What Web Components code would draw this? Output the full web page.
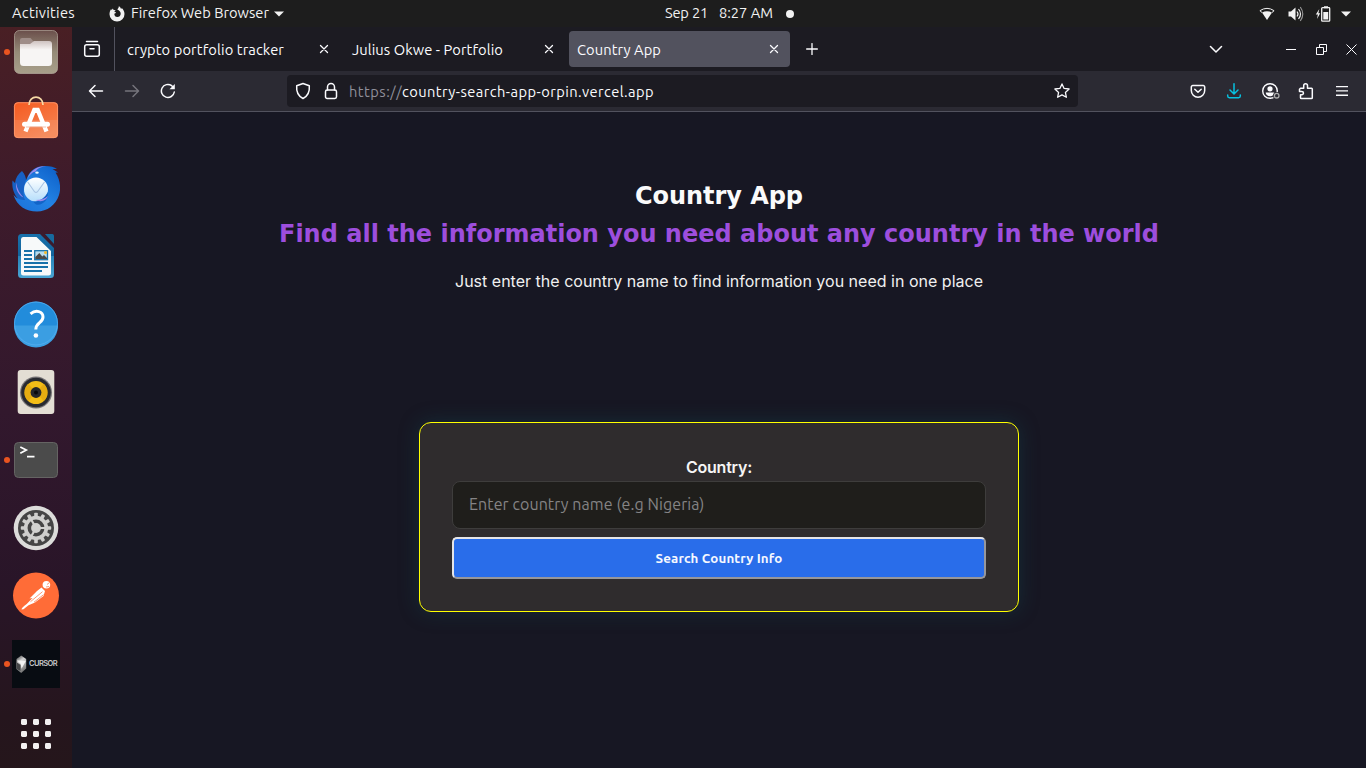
<!DOCTYPE html>
<html lang="en">
<head>
<meta charset="utf-8">
<title>Country App</title>
<style>
html,body{margin:0;height:100%;overflow:hidden;background:#171723}
body{font-family:Ubuntu,"Noto Sans",sans-serif;font-size:14.667px;color:#fbfbfe}
</style>
</head>
<body>
<desk-top></desk-top>
<script>
const line = 'fill="none" stroke="currentColor" stroke-width="1.3" stroke-linecap="round" stroke-linejoin="round"';
const bold = line.replace('1.3', '1.5');
const gear = Array.from({length:12},(_,i)=>`<rect x="22.2" y="8.8" width="3.6" height="6" rx=".8" transform="rotate(${i*30} 24 24)"/>`).join('');
const dots = [0,1,2].map(r=>[0,1,2].map(c=>`<rect x="${9+c*12}" y="${9+r*12}" width="6" height="6" rx="1.4"/>`).join('')).join('');
const ICONS = {
  flame:['0 0 16 16',16,'<path fill="#f2f2f2" d="M8.3 3.4c.7-1 1.600-1.900 1.500-3.200 1.500.8 2 1.700 2.200 2.700.5-.2.7-.6.8-1 1.600 1.500 2.700 3.500 2.700 6.100A7.500 7.500 0 0 1 .5 8.200c0-2.300.7-4 1.700-5.300l.3 1.300 1.400-1.700.7 1.600c.8-.2 1.700 0 2.200.5-.8.2-1.300.8-1.300 1.300l1.600.4c-.3.9-1.100 1-1.800 1.400C5.300 9.700 6.500 11 8.300 11c2 0 3.400-1.300 3.400-3.300 0-2.100-1.500-3.500-3.400-4.300z"/>'],
  tri:['0 0 10 6',10,'<path fill="#f2f2f2" d="M0 .5h10L5 5.500z"/>'],
  wifi:['0 0 16 14',16,'<path fill="#f2f2f2" d="M3 5.600Q8 2.800 13 5.600L8 13z"/><path fill="none" stroke="#f2f2f2" stroke-width="1" d="M3 5.500L.9 3.700Q8-1 15.100 3.700L13 5.500"/>'],
  volume:['0 0 16 16',16,'<path fill="#f2f2f2" d="M.5 5.500H3L7.500 1.500v13L3 10.500H.5z"/><path fill="none" stroke="#f2f2f2" stroke-width="1.200" d="M9 5.500q2 2.500 0 5M10.500 3q4 5 0 10"/><path fill="none" stroke="#999" stroke-width="1.100" d="M12.300 1q5 7 0 14"/>'],
  battery:['0 0 16 16',16,'<path fill="#f2f2f2" d="M4.300 3L.8 8.600h2.100L2 13l3.200-5.800H3.400zM9 .2h4v2H9z"/><rect x="6.700" y="1.700" width="8" height="13.500" rx=".8" fill="none" stroke="#f2f2f2" stroke-width="1.300"/><path fill="#f2f2f2" d="M8.300 6h4.900v7.500H8.300z"/>'],
  tabs:['0 0 18 18',18,`<g ${bold}><rect x="1.700" y="4.800" width="14.600" height="11.400" rx="2"/><path d="M3.500 1.500h11M7 8.800h4"/></g>`],
  x:['0 0 10 10',10,`<path ${line} d="M1.500 1.500l7 7M8.500 1.500l-7 7"/>`],
  plus:['0 0 12 12',12,`<path ${line} d="M6 .6v10.800M.6 6h10.800"/>`],
  chev:['0 0 14 8',14,`<path ${bold} d="M1.500 1.500L7 7l5.500-5.500"/>`],
  min:['0 0 11 11',11,'<path fill="currentColor" d="M0 5h10v1H0z"/>'],
  restore:['0 0 11 11',11,'<path fill="none" stroke="currentColor" d="M.5 3.500h7v7h-7zM3.500 3.500v-3h7v7h-3"/>'],
  close:['0 0 11 11',11,'<path fill="none" stroke="currentColor" d="M.5.5l10 10M10.500.5l-10 10"/>'],
  back:['0 0 16 16',16,`<path ${bold} d="M14.500 8H1.800M7 2.500L1.500 8 7 13.500"/>`],
  fwd:['0 0 16 16',16,`<path ${bold} d="M1.500 8h12.700M9 2.500L14.500 8 9 13.500"/>`],
  reload:['0 0 16 16',16,`<path ${bold} d="M14.300 9A6.500 6.500 0 1 1 11.700 2.700L13 4"/><path fill="currentColor" d="M14.800 1v5.300H9.500z"/>`],
  shield:['0 0 16 18',16,`<path ${bold} d="M8 1.500l6.300 2.200c.5 5.500-1.500 10.300-6.300 12.800C3.200 14 1.200 9.200 1.700 3.700z"/>`],
  lock:['0 0 14 18',14,`<g ${bold}><rect x="1.500" y="8" width="11" height="8.500" rx="1.700"/><path d="M3.500 8V5a3.500 3.500 0 0 1 7 0v3"/></g>`],
  star:['0 0 16 16',16,`<path ${line} d="M8 .9l2.100 4.500 5 .6-3.700 3.400 1 4.900L8 11.900l-4.400 2.400 1-4.900L.9 6l5-.6z"/>`],
  pocket:['0 0 16 16',16,`<path ${bold} d="M2.800 2.500h10.400a1.500 1.500 0 0 1 1.500 1.500v3.500a6.700 6.700 0 0 1-13.400 0V4a1.500 1.500 0 0 1 1.500-1.500zM4.800 6.200L8 9.300l3.200-3.100"/>`],
  down:['0 0 16 16',16,`<path ${bold} d="M8 .8v10M4 7l4 4 4-4M1.700 12v1a1.700 1.700 0 0 0 1.700 1.700h9.200a1.700 1.700 0 0 0 1.700-1.700v-1"/>`],
  account:['0 0 20 18',20,`<circle cx="9" cy="9" r="7.300" fill="none" stroke="currentColor" stroke-width="1.400"/><circle cx="9" cy="6.800" r="2.600" fill="currentColor"/><path fill="currentColor" d="M4.700 10.600h8.600c0 2-1.600 3.700-4.300 3.700s-4.300-1.700-4.300-3.700z"/><circle cx="15.700" cy="13.700" r="3.700" fill="#2b2a33"/><circle cx="15.700" cy="13.700" r="2.300" fill="#2b2a33" stroke="#aaa" stroke-width="1.300"/>`],
  puzzle:['0 0 16 18',16,`<path ${bold} d="M2.500 6.300h3.200V3.600a1.900 1.900 0 0 1 3.800 0v2.700h4a.8.8 0 0 1 .8.8v8.600a.8.8 0 0 1-.8.800H3.300a.8.800 0 0 1-.8-.8v-3h1.300a1.600 1.600 0 0 0 0-3.300H1.500V7.300z"/>`],
  menu:['0 0 12 12',12,'<path fill="currentColor" d="M0 1h12v1.300H0zM0 5.300h12v1.300H0zM0 9.600h12v1.300H0z"/>'],

  files:['0 0 48 48',48,'<defs><linearGradient id="a" x2="0" y2="1"><stop stop-color="#6b4f4b"/><stop offset=".5" stop-color="#958b78"/><stop offset="1" stop-color="#a89f8a"/></linearGradient><linearGradient id="b" x2="0" y2="1"><stop stop-color="#cfc3c1"/><stop offset=".35" stop-color="#f7f5f4"/></linearGradient></defs><rect x="2.500" y="2.500" width="43" height="43" rx="5" fill="url(#a)" stroke="#b3a99c" stroke-opacity=".7"/><path fill="#9f8d88" d="M8 12a2 2 0 0 1 2-2h8.500l3.500 4v4H8z"/><path fill="url(#b)" d="M8 16h10l4-3h15a3 3 0 0 1 3 3v18.500a3.500 3.500 0 0 1-3.500 3.500h-25A3.500 3.500 0 0 1 8 34.500z"/>'],
  store:['0 2 48 48',48,'<defs><linearGradient id="a" x2=".6" y2="1"><stop stop-color="#f55a20"/><stop offset="1" stop-color="#f58250"/></linearGradient></defs><rect x="2" y="8.300" width="44" height="35.700" rx="4" fill="url(#a)"/><path fill="#fff" opacity=".09" d="M2 26h44v14a4 4 0 0 1-4 4H6a4 4 0 0 1-4-4z"/><rect x="2.400" y="8.700" width="43.200" height="35" rx="3.600" fill="none" stroke="#ff9a70" stroke-width=".8"/><path d="M17 11c0-10.500 14-10.500 14 0" fill="none" stroke="#f6d9a5" stroke-width="1.700"/><path d="M13.500 37.500L22.300 16h3.400l8.800 21.500" fill="none" stroke="#fff" stroke-width="4.300"/><path d="M22 14h4v5h-4z" fill="#fff"/><rect x="10" y="27.800" width="28" height="5" rx="2.500" fill="#fff"/><path d="M14 33h20" stroke="#eba689" stroke-width=".7"/>'],
  bird:['0 0 48 48',48,'<defs><linearGradient id="a" x1="0" y1="1" x2=".8" y2="0"><stop stop-color="#1b71d8"/><stop offset=".5" stop-color="#2382e4"/><stop offset="1" stop-color="#0f63cb"/></linearGradient><linearGradient id="b" x2="0" y2="1"><stop stop-color="#fff"/><stop offset="1" stop-color="#b5defb"/></linearGradient></defs><path fill="#1760c4" d="M10 7C14.500 12 15.500 18 12 26L18 40C6 40-1 28 .5 16.500L3 19C3.500 14 6 10 10 7z"/><path fill="url(#a)" d="M15 14C18 6 25 2 32 2c6-.2 10 1 13 3h-4.500L46 8.500l-2.500.1C48.500 16 49 25 47 31 44 41 35 47.500 25 47.500 14 47.500 5 42 1.500 31 5 35 9 36 13 36 10 30 12 20 15 14z"/><path fill="#9c88ea" d="M15.500 14.500C18.500 6 26 1.500 34 2.200 28 3 25.500 4.500 23.500 7.500 20 8 17.500 11 15.500 14.500zM4 18.500C5 25 8 30 11.500 33.500 6 31 3.500 25 4 18.500z"/><circle cx="24" cy="25.600" r="12" fill="url(#b)"/><path d="M15.700 18L22.500 27.700q1.500 1.700 3 0L32.500 18" fill="none" stroke="#a9c4e3" stroke-width="1.100"/><path fill="#1264c8" d="M21 37.800c7-.3 12-4 14.800-9.800C37 35 31 42 24 40.500z"/><path fill="#9c88ea" d="M23.500 36c5 0 9-1 12.500-4-2 5-6.500 6.500-12.500 4z"/><ellipse cx="25" cy="8.700" rx="1.800" ry="1.100" fill="#e3f2ff"/>'],
  writer:['0 0 48 48',48,'<defs><linearGradient id="a" x2="0" y2="1"><stop stop-color="#1871ac"/><stop offset=".5" stop-color="#12639b"/><stop offset=".5" stop-color="#2683b9"/><stop offset="1" stop-color="#49a5d3"/></linearGradient></defs><path fill="url(#a)" d="M9.500 2H28l14 14v26.500a3.500 3.500 0 0 1-3.500 3.500h-29A3.500 3.500 0 0 1 6 42.500v-37A3.500 3.500 0 0 1 9.500 2z"/><path fill="#f7f9fa" d="M11 5h13.500L39 19v22a2.500 2.500 0 0 1-2.500 2.500H11.500A2.500 2.500 0 0 1 9 41V7.500A2.500 2.500 0 0 1 11 5z"/><path fill="#176a9e" d="M33 2h7.500A1.800 1.800 0 0 1 42 3.500v8.500z"/><path stroke="#1872aa" stroke-width="2" d="M12 19h8M12 23h8M12 27h8M12 31h24M12 35h24M12 39h18"/><rect x="22.700" y="18.700" width="12.800" height="9" fill="#b8dced" stroke="#1872aa" stroke-width="1.300"/><path fill="#4b4a49" d="M23.300 27v-2l4-4 3 3.500 1.700-1.500 3 3v1z"/><circle cx="33.500" cy="20.600" r="1.500" fill="#f5b92a"/>'],
  help:['0 .5 48 48',48,'<circle cx="24" cy="24" r="22" fill="#228cdb"/><path fill="#3b9ee2" d="M2 26h44a22 22 0 0 1-44 0z"/><circle cx="24" cy="24" r="21.500" fill="none" stroke="#55aef0" stroke-width=".8"/><path fill="none" stroke="#fff" stroke-width="3" d="M18.500 14.300c5.500-4.500 12.500-2.500 12.500 3.200 0 6-7.200 5.500-7.200 12.500"/><circle cx="23.900" cy="36" r="2.300" fill="#fff"/>'],
  speaker:['0 0 48 48',48,'<rect x="5.700" y="2" width="36.600" height="44" rx="3" fill="#e3ded4"/><circle cx="24" cy="24.500" r="16" fill="#777476"/><circle cx="24" cy="24.500" r="14.800" fill="#282a30"/><circle cx="24" cy="24.500" r="11.600" fill="#f3bd17"/><path fill="#d89c0b" d="M12.400 24.500a11.600 11.600 0 0 1 4-8.600l7.600 8.600-7.800 8.500a11.600 11.600 0 0 1-3.800-8.500zM35.600 24.500a11.600 11.600 0 0 0-4-8.600L24 24.500l7.800 8.500a11.600 11.600 0 0 0 3.800-8.500z" opacity=".5"/><circle cx="24" cy="24.500" r="5.400" fill="#25262a"/><circle cx="24" cy="24.500" r="2" fill="#08090b"/>'],
  terminal:['0 0 48 48',48,'<rect x="2.500" y="6.500" width="43" height="35" rx="4" fill="#4b4b4b" stroke="#656463"/><path fill="none" stroke="#fff" stroke-width="1.700" d="M8.300 11l6 3-6 3.200M15 20.700h7.500"/>'],
  settings:['0 0 48 48',48,`<circle cx="24" cy="24" r="22.300" fill="#dcdcda"/><circle cx="24" cy="24" r="18" fill="#454545"/><g fill="#cfcfcd">${gear}</g><circle cx="24" cy="24" r="10.300" fill="none" stroke="#cfcfcd" stroke-width="3.700"/><path stroke="#d2d2d0" stroke-width="2.200" d="M24 24h10M24 24l-5-8.700M24 24l-5 8.700"/><circle cx="24" cy="24" r="4.900" fill="#d2d2d0"/>`],
  postman:['0 .5 48 48',48,'<circle cx="24" cy="24" r="23" fill="#ff6c37"/><circle cx="34.400" cy="13.300" r="3.800" fill="#fff"/><path fill="#fff" d="M29.500 16l3.500 3.500-1.500 5-8.500 6.500-6.500 2.700-5 4.100-2 .2c0-1.300 1.700-2.700 5.200-5.400L20.500 26.500l-3 .6 7.500-7.500z"/><path fill="none" stroke="#ff6c37" stroke-width=".7" d="M18.500 30.200l12-10M22 30.700l9.500-7.500M35 13l2.500-2M34 15.500l3-.5"/>'],
  cursor:['0 0 48 48',48,'<defs><linearGradient id="a" x2=".4" y2="1"><stop stop-color="#333"/><stop offset=".4" stop-color="#d3d3d3"/><stop offset="1" stop-color="#777"/></linearGradient></defs><path fill="#080c12" d="M0 0h48v48H0z"/><path fill="url(#a)" d="M9.200 15.500l5 3.500v9.500l-5 4.500-4.700-4v-10z"/><path fill="#f2f2f2" d="M5 20.500l9 .2-4.500 8-.8-4.700z"/><path fill="#454648" d="M4.500 22l4 3v6l-4-2z"/>'],
  grid:['0 0 48 48',48,`<g fill="#f2f0f1">${dots}</g>`]
};

const define = (name, html, setup) => customElements.define(name, class extends HTMLElement {
  connectedCallback(){
    if(this.shadowRoot) return;
    const t = document.createElement('template');
    t.innerHTML = typeof html === 'function' ? html(this) : html;
    this.attachShadow({mode:'open'}).append(t.content.cloneNode(true));
    if(setup) setup(this);
  }
});

define('ui-icon', el => {
  const [box,w,body] = ICONS[el.getAttribute('name')];
  const [, , bw, bh] = box.split(' ').map(Number);
  return `<style>:host{display:block;flex:none;width:${w}px;height:${w*bh/bw}px}svg{display:block}</style><svg width="${w}" height="${w*bh/bw}" viewBox="${box}">${body}</svg>`;
});

/* Single line of text tracked to an exact advance width given by the "w" attribute. */
define('fit-text', '<style>:host{display:block;flex:none;white-space:pre}span{display:inline-block}</style><span><slot></slot></span>', el => {
  const want = +el.getAttribute('w'), span = el.shadowRoot.querySelector('span');
  el.style.width = want + 'px';
  const fit = () => {
    span.style.letterSpacing = '0';
    span.style.letterSpacing = (want - span.getBoundingClientRect().width) / el.textContent.length + 'px';
  };
  requestAnimationFrame(fit);
  fit();
});

define('top-bar', `<style>
:host{display:grid;grid-template-columns:1fr auto 1fr;align-items:center;height:27px;background:#1d1d1d;color:#f2f2f2;line-height:27px}
div{display:flex;align-items:center}
fit-text{line-height:26px;height:27px}
.l{padding-left:12px}.l ui-icon:first-of-type{margin:0 6px 0 34px}.l ui-icon:last-of-type{margin-left:5px}
.c{gap:11px;padding-left:93px}.dot{width:8px;height:8px;border-radius:50%;background:#f2f2f2;margin-left:2px}
.r{justify-content:flex-end;padding-right:15px}
</style>
<div class="l"><fit-text w="63">Activities</fit-text><ui-icon name="flame"></ui-icon><fit-text w="138">Firefox Web Browser</fit-text><ui-icon name="tri"></ui-icon></div>
<div class="c"><fit-text w="43">Sep 21</fit-text><fit-text w="54">8:27 AM</fit-text><i class="dot"></i></div>
<div class="r"><ui-icon name="wifi"></ui-icon><ui-icon name="volume" style="margin-left:13px"></ui-icon><ui-icon name="battery" style="margin-left:11px"></ui-icon><ui-icon name="tri" style="margin-left:10px"></ui-icon></div>`);

define('dock-item', el => `<style>
:host{display:flex;position:relative;height:68px;align-items:center;justify-content:center}
i{position:absolute;left:4px;top:31px;width:6px;height:6px;border-radius:50%;background:#e95420}
.logo{position:absolute;left:29px;top:26px;font:600 7.500px/16px Inter,sans-serif;color:#c8c9ca}
</style>${el.hasAttribute('running')?'<i></i>':''}<ui-icon name="${el.getAttribute('icon')}"></ui-icon>${el.getAttribute('icon')==='cursor'?'<fit-text class="logo" w="28">CURSOR</fit-text>':''}`);

define('app-dock', `<style>
:host{display:block;width:72px;overflow:hidden;background:linear-gradient(#491f24 0,#3e1b2b 22%,#32182d 52%,#291528 75%,#25151d 93%,#25161b)}
div{margin-top:-9px}
</style><div>
<dock-item icon="files" running></dock-item><dock-item icon="store"></dock-item><dock-item icon="bird"></dock-item><dock-item icon="writer"></dock-item><dock-item icon="help"></dock-item><dock-item icon="speaker"></dock-item><dock-item icon="terminal" running></dock-item><dock-item icon="settings"></dock-item><dock-item icon="postman"></dock-item><dock-item icon="cursor" running></dock-item><dock-item icon="grid" style="margin-top:2px"></dock-item></div>`);

define('browser-tab', el => `<style>
:host{display:flex;box-sizing:border-box;width:221px;height:36px;padding:0 11px 0 8px;border-radius:4px;align-items:center;justify-content:space-between;line-height:36px}
:host([active]){background:#52525e}
fit-text{padding-top:1px;height:35px}
</style><fit-text w="${el.getAttribute('w')}">${el.getAttribute('label')}</fit-text><ui-icon name="x"></ui-icon>`);

define('tab-strip', `<style>
:host{display:flex;align-items:center;height:44px;background:#1c1b22}
.v{width:43px;height:44px;box-sizing:border-box;border-right:1px solid #52525e;display:flex;align-items:center;justify-content:center;padding-right:2px}
.tabs{display:flex;gap:4px;margin-left:4px}
.win{display:flex;align-items:center;margin-left:auto;padding-right:9px}
</style><div class="v"><ui-icon name="tabs"></ui-icon></div>
<div class="tabs"><browser-tab label="crypto portfolio tracker" w="157"></browser-tab><browser-tab label="Julius Okwe - Portfolio" w="151"></browser-tab><browser-tab active label="Country App" w="84"></browser-tab></div>
<ui-icon name="plus" style="margin-left:16px"></ui-icon>
<div class="win"><ui-icon name="chev" style="margin-right:63px"></ui-icon><ui-icon name="min"></ui-icon><ui-icon name="restore" style="margin:0 19px"></ui-icon><ui-icon name="close"></ui-icon></div>`);

define('nav-bar', `<style>
:host{display:flex;align-items:center;height:40px;background:#2b2a33;border-bottom:1px solid #52525e}
.nav{display:flex;gap:20px;margin-left:16px}
.url{display:flex;align-items:center;width:791px;height:32px;box-sizing:border-box;margin-left:111px;padding:0 8px;background:#1c1b22;border-radius:4px;line-height:32px}
fit-text{padding-top:1px;height:31px}
.url fit-text:first-of-type{color:#8f8f9a;margin-left:11px}
.acts{display:flex;align-items:center;margin-left:112px}
</style>
<div class="nav"><ui-icon name="back"></ui-icon><ui-icon name="fwd" style="color:#75747c"></ui-icon><ui-icon name="reload"></ui-icon></div>
<div class="url"><ui-icon name="shield"></ui-icon><ui-icon name="lock" style="margin-left:13px"></ui-icon><fit-text w="53">https://</fit-text><fit-text w="252">country-search-app-orpin.vercel.app</fit-text><ui-icon name="star" style="margin-left:auto"></ui-icon></div>
<div class="acts"><ui-icon name="pocket"></ui-icon><ui-icon name="down" style="margin-left:19.500px;color:#00ddff;opacity:.85"></ui-icon><ui-icon name="account" style="margin-left:19.500px"></ui-icon><ui-icon name="puzzle" style="margin-left:17px"></ui-icon><ui-icon name="menu" style="margin-left:22px"></ui-icon></div>`);

define('search-card', `<style>
:host{display:block;box-sizing:border-box;width:600px;height:190px;padding:32px;border:1px solid #ff0;border-radius:12px;background:#2f2c2d;box-shadow:0 0 20px rgba(20,75,85,.4)}
form{display:flex;flex-direction:column;align-items:stretch}
label{align-self:center;height:26px;font:600 16px/24px Inter,sans-serif;color:#f5f5f5}
input{box-sizing:border-box;height:48px;border:1px solid #3e3d3c;border-radius:8px;background:#1f1e1b;padding:0 16px 2px;font:16px Ubuntu,"Noto Sans",sans-serif;letter-spacing:.09px;color:#fff;outline:0}
input::placeholder{color:#858485;opacity:1}
button{box-sizing:border-box;height:42px;margin:8px 0 0;padding:0;border:2px solid;border-color:#e5e5e7 #97979b #97979b #e5e5e7;border-radius:5px;background:#296dea;color:#f5f8ff;font:700 13.333px/38px Ubuntu,"Noto Sans",sans-serif;display:flex;justify-content:center}
button fit-text{line-height:40px;height:38px}
</style><form><label for="c"><fit-text w="66">Country:</fit-text></label><input id="c" placeholder="Enter country name (e.g Nigeria)"><button type="button"><fit-text w="127">Search Country Info</fit-text></button></form>`);

define('country-page', `<style>
:host{display:flex;flex-direction:column;align-items:center;flex:1;padding-top:65px;background:#171723}
h1,h2,p{margin:0}
h1,h2{font:700 24px/38px "DejaVu Sans",sans-serif;color:#fafafa}
h2{color:#9d4edd}
p{margin:16px 0 129px;font:400 16px/24px Inter,sans-serif;color:#f0f0f0}
</style><h1><fit-text w="168">Country App</fit-text></h1><h2><fit-text w="880">Find all the information you need about any country in the world</fit-text></h2><p><fit-text w="528">Just enter the country name to find information you need in one place</fit-text></p><search-card></search-card>`);

define('desk-top', `<style>
:host{display:flex;flex-direction:column;width:1366px;height:768px}
.row{display:flex;flex:1;min-height:0}.win{display:flex;flex-direction:column;flex:1}
</style><top-bar></top-bar><div class="row"><app-dock></app-dock><div class="win"><tab-strip></tab-strip><nav-bar></nav-bar><country-page></country-page></div></div>`);
</script>
</body>
</html>
